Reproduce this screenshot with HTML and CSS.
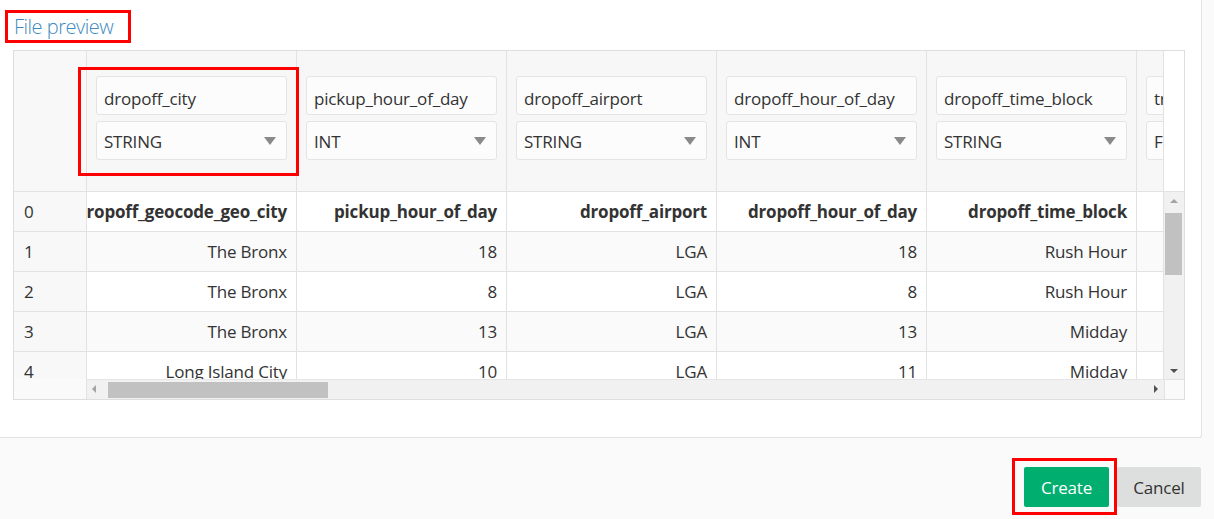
FILE: index.html
```html
<!DOCTYPE html>
<html>
<head>
<meta charset="utf-8">
<link rel="stylesheet" href="styles.css">
</head>
<body>
<div class="panel">
  <div class="title-row">
    <span class="title">File preview</span>
    <span class="mark mark-title"></span>
  </div>
  <div class="grid-wrap">
    <div class="head-band">
      <div class="idx-head"></div>
      <div class="col-head">
        <div class="field name">dropoff_city</div>
        <div class="field select">STRING<span class="caret"></span></div>
      </div>
      <div class="col-head">
        <div class="field name">pickup_hour_of_day</div>
        <div class="field select">INT<span class="caret"></span></div>
      </div>
      <div class="col-head">
        <div class="field name">dropoff_airport</div>
        <div class="field select">STRING<span class="caret"></span></div>
      </div>
      <div class="col-head">
        <div class="field name">dropoff_hour_of_day</div>
        <div class="field select">INT<span class="caret"></span></div>
      </div>
      <div class="col-head">
        <div class="field name">dropoff_time_block</div>
        <div class="field select">STRING<span class="caret"></span></div>
      </div>
      <div class="col-head partial">
        <div class="field name">trip_distance</div>
        <div class="field select">FLOAT<span class="caret"></span></div>
      </div>
      <div class="band-filler"></div>
      <span class="mark mark-col"></span>
    </div>
    <div class="body">
      <div class="body-main">
        <div class="rows">
          <div class="row head-row">
            <div class="idx">0</div>
            <div class="cell"><span>dropoff_geocode_geo_city</span></div>
            <div class="cell"><span>pickup_hour_of_day</span></div>
            <div class="cell"><span>dropoff_airport</span></div>
            <div class="cell"><span>dropoff_hour_of_day</span></div>
            <div class="cell"><span>dropoff_time_block</span></div>
            <div class="cell partial"></div>
          </div>
          <div class="row odd">
            <div class="idx">1</div>
            <div class="cell"><span>The Bronx</span></div>
            <div class="cell"><span>18</span></div>
            <div class="cell"><span>LGA</span></div>
            <div class="cell"><span>18</span></div>
            <div class="cell"><span>Rush Hour</span></div>
            <div class="cell partial"></div>
          </div>
          <div class="row">
            <div class="idx">2</div>
            <div class="cell"><span>The Bronx</span></div>
            <div class="cell"><span>8</span></div>
            <div class="cell"><span>LGA</span></div>
            <div class="cell"><span>8</span></div>
            <div class="cell"><span>Rush Hour</span></div>
            <div class="cell partial"></div>
          </div>
          <div class="row odd">
            <div class="idx">3</div>
            <div class="cell"><span>The Bronx</span></div>
            <div class="cell"><span>13</span></div>
            <div class="cell"><span>LGA</span></div>
            <div class="cell"><span>13</span></div>
            <div class="cell"><span>Midday</span></div>
            <div class="cell partial"></div>
          </div>
          <div class="row">
            <div class="idx">4</div>
            <div class="cell"><span>Long Island City</span></div>
            <div class="cell"><span>10</span></div>
            <div class="cell"><span>LGA</span></div>
            <div class="cell"><span>11</span></div>
            <div class="cell"><span>Midday</span></div>
            <div class="cell partial"></div>
          </div>
        </div>
        <div class="hbar">
          <div class="idx-blank"></div>
          <div class="htrack">
            <span class="arr arr-left"></span>
            <span class="hthumb"></span>
            <span class="arr arr-right"></span>
          </div>
        </div>
      </div>
      <div class="vbar">
        <div class="vtrack">
          <span class="arr arr-up"></span>
          <span class="vthumb"></span>
          <span class="arr arr-down"></span>
        </div>
        <div class="corner"></div>
      </div>
    </div>
  </div>
</div>
<div class="footer">
  <div class="btn-wrap">
    <button class="btn btn-create">Create</button>
    <span class="mark mark-btn"></span>
  </div>
  <button class="btn btn-cancel">Cancel</button>
</div>
</body>
</html>
```
FILE: styles.css
```css
* { box-sizing: border-box; }
html, body { margin: 0; padding: 0; }
body {
  width: 1214px;
  height: 519px;
  overflow: hidden;
  background: #fafafa;
  font-family: "Open Sans", "Liberation Sans", sans-serif;
  color: #333;
  font-size: 17px;
  letter-spacing: -0.2px;
}
.panel {
  width: 1202px;
  height: 438px;
  background: #fff;
  border-right: 1px solid #e2e2e2;
  border-bottom: 1px solid #e2e2e2;
  border-bottom-right-radius: 3px;
  padding-top: 10px;
}
.title-row {
  position: relative;
  height: 40px;
  padding-left: 14px;
  padding-top: 2px;
}
.title {
  font-size: 20px;
  font-weight: 300;
  letter-spacing: -0.5px;
  color: #3d8ac0;
  line-height: 30px;
}
.mark {
  position: absolute;
  border: 3px solid #f00;
  pointer-events: none;
}
.mark-title { left: 5px; top: 0; width: 126px; height: 33px; }
.grid-wrap {
  margin-left: 13px;
  width: 1172px;
  height: 350px;
  border: 1px solid #dedede;
}
.head-band {
  position: relative;
  display: flex;
  height: 141px;
  border-bottom: 1px solid #e2e2e2;
}
.idx-head {
  width: 73px;
  flex: none;
  background: #f8f8f8;
  border-right: 1px solid #e2e2e2;
}
.col-head {
  width: 210px;
  flex: none;
  background: #f7f7f7;
  border-right: 1px solid #e2e2e2;
  padding: 25px 9px 0 9px;
  display: flex;
  flex-direction: column;
  gap: 6px;
  overflow: hidden;
}
.col-head.partial { width: 27px; padding-right: 0; }
.col-head.partial .field { width: 191px; flex: none; }
.band-filler { flex: 1; background: #fff; }
.field {
  position: relative;
  height: 39px;
  border: 1px solid #e4e4e4;
  border-radius: 3px;
  background: #fcfcfc;
  padding-left: 7px;
  line-height: 37px;
  white-space: nowrap;
  overflow: hidden;
}
.field.name { padding-top: 3px; }
.field.select { padding-top: 1px; }
.caret {
  position: absolute;
  right: 10px;
  top: 15px;
  width: 0;
  height: 0;
  border-left: 6px solid transparent;
  border-right: 6px solid transparent;
  border-top: 8px solid #8a8a8a;
}
.mark-col { left: 64px; top: 16px; width: 221px; height: 109px; }
.body { display: flex; height: 207px; }
.body-main { width: 1150px; display: flex; flex-direction: column; }
.rows { height: 187px; overflow: hidden; }
.row { display: flex; height: 40px; background: #fff; }
.row.odd { background: #fafafa; }
.idx {
  width: 73px;
  flex: none;
  background: #f8f8f8;
  border-right: 1px solid #e2e2e2;
  border-bottom: 1px solid #e2e2e2;
  padding-left: 10px;
  line-height: 39px;
}
.cell {
  width: 210px;
  flex: none;
  border-right: 1px solid #e2e2e2;
  border-bottom: 1px solid #e2e2e2;
  display: flex;
  justify-content: flex-end;
  padding-right: 9px;
  line-height: 39px;
  overflow: hidden;
  white-space: nowrap;
}
.cell.partial { width: 27px; padding: 0; }
.head-row .cell { font-weight: 700; }
.hbar { display: flex; height: 20px; }
.idx-blank {
  width: 73px;
  flex: none;
  background: #fafafa;
  border-right: 1px solid #e2e2e2;
}
.htrack {
  position: relative;
  flex: 1;
  background: #f1f1f1;
  border-top: 1px solid #e6e6e6;
}
.hthumb {
  position: absolute;
  left: 21px;
  top: 2px;
  width: 220px;
  height: 16px;
  background: #c1c1c1;
}
.arr { position: absolute; width: 0; height: 0; }
.arr-left {
  left: 5px; top: 5px;
  border-top: 4px solid transparent;
  border-bottom: 4px solid transparent;
  border-right: 4px solid #a3a3a3;
}
.arr-right {
  right: 6px; top: 5px;
  border-top: 4px solid transparent;
  border-bottom: 4px solid transparent;
  border-left: 4px solid #505050;
}
.vbar { width: 20px; display: flex; flex-direction: column; }
.vtrack {
  position: relative;
  height: 187px;
  background: #f1f1f1;
}
.vthumb {
  position: absolute;
  left: 1px;
  top: 21px;
  width: 17px;
  height: 62px;
  background: #c1c1c1;
}
.arr-up {
  left: 6px; top: 7px;
  border-left: 4px solid transparent;
  border-right: 4px solid transparent;
  border-bottom: 4px solid #a3a3a3;
}
.arr-down {
  left: 6px; bottom: 6px;
  border-left: 4px solid transparent;
  border-right: 4px solid transparent;
  border-top: 4px solid #505050;
}
.corner {
  height: 20px;
  background: #fafafa;
  border-top: 1px solid #e2e2e2;
  border-left: 1px solid #e2e2e2;
}
.footer {
  display: flex;
  justify-content: flex-end;
  padding-top: 29px;
  padding-right: 13px;
  align-items: flex-start;
}
.btn-wrap { position: relative; margin-right: 8px; }
.btn {
  height: 40px;
  border: none;
  border-radius: 2px;
  font-family: "Open Sans", "Liberation Sans", sans-serif;
  font-size: 17px;
  letter-spacing: -0.2px;
  padding: 0;
}
.btn-create { width: 85px; background: #00ae6f; color: #fff; display: block; }
.btn-cancel { width: 84px; background: #dddfde; color: #333; }
.mark-btn { left: -12px; top: -9px; width: 105px; height: 57px; }
```
